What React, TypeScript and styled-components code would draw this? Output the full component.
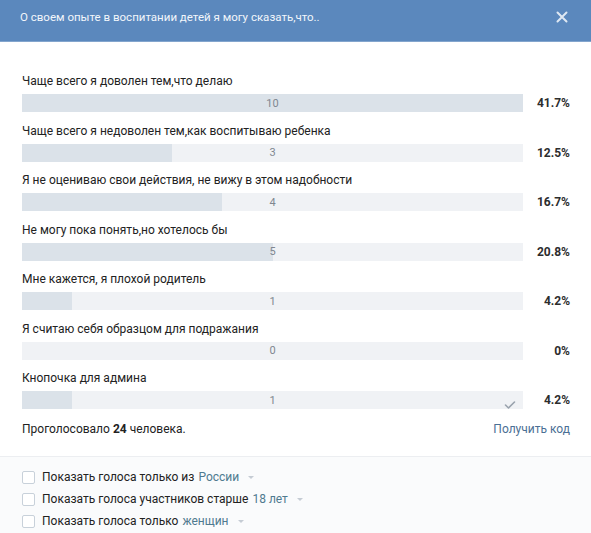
import React from 'react';
import styled, { createGlobalStyle } from 'styled-components';

const GlobalStyle = createGlobalStyle`
    html, body {
        margin: 0;
        padding: 0;
        background: #fff;
    }
    body {
        font-family: Roboto, "Open Sans", "Liberation Sans", sans-serif;
        -webkit-font-smoothing: antialiased;
    }
`;

const Box = styled.div`
    width: 591px;
    height: 533px;
    overflow: hidden;
    background: #fff;
    display: flex;
    flex-direction: column;
`;

const Header = styled.div`
    height: 42px;
    box-sizing: border-box;
    background: #5b88bd;
    border-bottom: 1px solid #83a5cd;
    padding: 9px 20px 0 20px;
    display: flex;
    align-items: flex-start;
    justify-content: space-between;
`;

const Title = styled.div`
    color: #f2f6fb;
    font-size: 11.5px;
    line-height: 16px;
`;

const Close = styled.div`
    width: 16px;
    height: 16px;
    margin-right: 1px;
    display: flex;
    align-items: center;
    justify-content: center;
`;

const Body = styled.div`
    padding: 31px 21px 0 22px;
`;

const Row = styled.div`
    margin-bottom: 10.5px;
`;

const Label = styled.div`
    font-size: 12px;
    line-height: 17px;
    color: #222;
    margin-bottom: 4px;
    white-space: nowrap;
`;

const BarLine = styled.div`
    display: flex;
    align-items: center;
`;

const Track = styled.div`
    position: relative;
    width: 501px;
    height: 18px;
    background: #f0f2f5;
    flex: none;
`;

const Fill = styled.div`
    height: 100%;
    background: #dbe2e9;
`;

const Count = styled.div`
    position: absolute;
    inset: 0;
    display: flex;
    align-items: center;
    justify-content: center;
    font-size: 11px;
    color: #7f8790;
`;

const Check = styled.div`
    position: absolute;
    right: 7px;
    top: 4px;
    width: 12px;
    height: 10px;
`;

const Percent = styled.div`
    flex: 1;
    text-align: right;
    font-size: 12px;
    font-weight: 700;
    color: #2c2d2e;
`;

const Summary = styled.div`
    display: flex;
    justify-content: space-between;
    align-items: center;
    margin-top: 9px;
    height: 18px;
    font-size: 12px;
    color: #222;
    padding-bottom: 18px;
`;

const CodeLink = styled.span`
    color: #4b6f94;
`;

const Footer = styled.div`
    flex: 1;
    background: #fafbfc;
    border-top: 1px solid #eceef1;
    padding: 13px 22px 0 22px;
    display: flex;
    flex-direction: column;
    gap: 7px;
`;

const Option = styled.label`
    display: flex;
    align-items: center;
    height: 15px;
    font-size: 12px;
    color: #222;
`;

const Checkbox = styled.span`
    width: 13px;
    height: 13px;
    box-sizing: border-box;
    border: 1px solid #c8d1da;
    border-radius: 2px;
    background: #fff;
    margin-right: 7px;
    flex: none;
`;

const Choice = styled.span`
    color: #4f7a8f;
    margin-left: 4px;
`;

const Caret = styled.span`
    width: 0;
    height: 0;
    margin-left: 9px;
    border-left: 3px solid transparent;
    border-right: 3px solid transparent;
    border-top: 3px solid #c5ccd4;
`;

const answers = [
    { text: 'Чаще всего я доволен тем,что делаю', count: 10, pct: '41.7%' },
    { text: 'Чаще всего я недоволен тем,как воспитываю ребенка', count: 3, pct: '12.5%' },
    { text: 'Я не оцениваю свои действия, не вижу в этом надобности', count: 4, pct: '16.7%' },
    { text: 'Не могу пока понять,но хотелось бы', count: 5, pct: '20.8%' },
    { text: 'Мне кажется, я плохой родитель', count: 1, pct: '4.2%' },
    { text: 'Я считаю себя образцом для подражания', count: 0, pct: '0%' },
    { text: 'Кнопочка для админа', count: 1, pct: '4.2%', mine: true },
];

const filters = [
    { text: 'Показать голоса только из', choice: 'России' },
    { text: 'Показать голоса участников старше', choice: '18 лет' },
    { text: 'Показать голоса только', choice: 'женщин' },
];

const max = Math.max(...answers.map(a => a.count));

export default function App() {
    return (
        <>
            <GlobalStyle />
            <Box>
                <Header>
                    <Title>О своем опыте в воспитании детей я могу сказать,что..</Title>
                    <Close>
                        <svg width="12" height="12" viewBox="0 0 12 12">
                            <path d="M1.5 1.5 L10.5 10.5 M10.5 1.5 L1.5 10.5" stroke="#dfe8f3" strokeWidth="2" strokeLinecap="round" />
                        </svg>
                    </Close>
                </Header>
                <Body>
                    {answers.map((a, i) => (
                        <Row key={i}>
                            <Label>{a.text}</Label>
                            <BarLine>
                                <Track>
                                    <Fill style={{ width: `${(a.count / max) * 100}%` }} />
                                    <Count>{a.count}</Count>
                                    {a.mine && (
                                        <Check>
                                            <svg width="12" height="10" viewBox="0 0 12 10">
                                                <path d="M1.5 5 L4.5 8 L10.5 2" fill="none" stroke="#9aa3ad" strokeWidth="1.6" strokeLinecap="round" strokeLinejoin="round" />
                                            </svg>
                                        </Check>
                                    )}
                                </Track>
                                <Percent>{a.pct}</Percent>
                            </BarLine>
                        </Row>
                    ))}
                    <Summary>
                        <span>Проголосовало <b>24</b> человека.</span>
                        <CodeLink>Получить код</CodeLink>
                    </Summary>
                </Body>
                <Footer>
                    {filters.map((f, i) => (
                        <Option key={i}>
                            <Checkbox />
                            {f.text}
                            <Choice>{f.choice}</Choice>
                            <Caret />
                        </Option>
                    ))}
                </Footer>
            </Box>
        </>
    );
}
